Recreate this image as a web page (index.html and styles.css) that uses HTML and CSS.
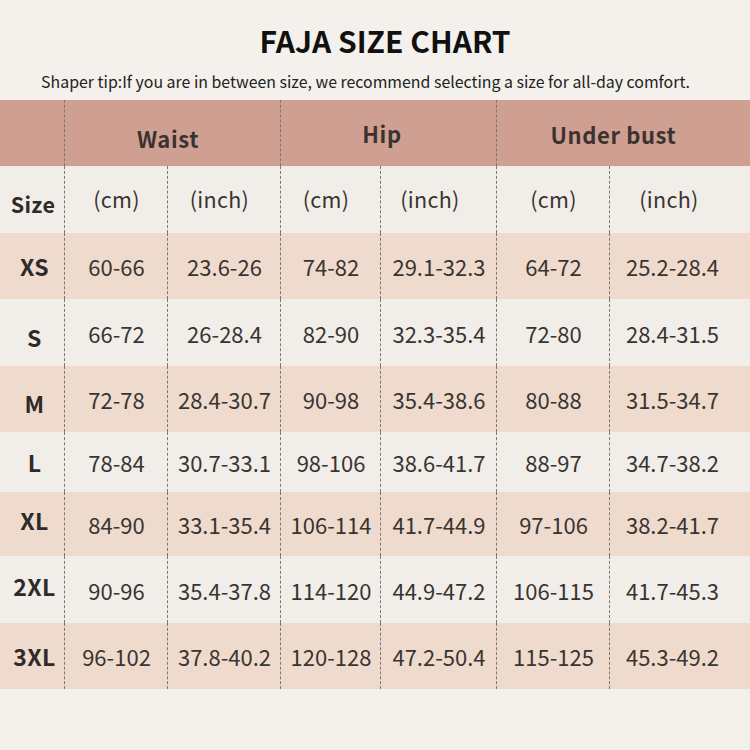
FILE: index.html
```html
<!DOCTYPE html>
<html>
<head>
<meta charset="utf-8">
<link rel="stylesheet" href="styles.css">
</head>
<body>
<div class="page">
  <h1 class="title">FAJA SIZE CHART</h1>
  <p class="tip">Shaper tip:If you are in between size, we recommend selecting a size for all-day comfort.</p>
  <div class="chart">
    <div class="row head">
      <div class="cell"></div>
      <div class="cell span2 dash waist">Waist</div>
      <div class="cell span2 dash hip">Hip</div>
      <div class="cell span2 dash bust">Under bust</div>
    </div>
    <div class="row units light">
      <div class="cell size">Size</div>
      <div class="cell dash">(cm)</div>
      <div class="cell dash shift">(inch)</div>
      <div class="cell dash shift">(cm)</div>
      <div class="cell dash shift2">(inch)</div>
      <div class="cell dash">(cm)</div>
      <div class="cell dash last">(inch)</div>
    </div>
    <div class="row data pink">
      <div class="cell size">XS</div>
      <div class="cell dash">60-66</div>
      <div class="cell dash">23.6-26</div>
      <div class="cell dash">74-82</div>
      <div class="cell dash">29.1-32.3</div>
      <div class="cell dash">64-72</div>
      <div class="cell dash last">25.2-28.4</div>
    </div>
    <div class="row data light tall">
      <div class="cell size low">S</div>
      <div class="cell dash">66-72</div>
      <div class="cell dash">26-28.4</div>
      <div class="cell dash">82-90</div>
      <div class="cell dash">32.3-35.4</div>
      <div class="cell dash">72-80</div>
      <div class="cell dash last">28.4-31.5</div>
    </div>
    <div class="row data pink">
      <div class="cell size low">M</div>
      <div class="cell dash">72-78</div>
      <div class="cell dash">28.4-30.7</div>
      <div class="cell dash">90-98</div>
      <div class="cell dash">35.4-38.6</div>
      <div class="cell dash">80-88</div>
      <div class="cell dash last">31.5-34.7</div>
    </div>
    <div class="row data light short">
      <div class="cell size">L</div>
      <div class="cell dash">78-84</div>
      <div class="cell dash">30.7-33.1</div>
      <div class="cell dash">98-106</div>
      <div class="cell dash">38.6-41.7</div>
      <div class="cell dash">88-97</div>
      <div class="cell dash last">34.7-38.2</div>
    </div>
    <div class="row data pink mid">
      <div class="cell size high">XL</div>
      <div class="cell dash">84-90</div>
      <div class="cell dash">33.1-35.4</div>
      <div class="cell dash">106-114</div>
      <div class="cell dash">41.7-44.9</div>
      <div class="cell dash">97-106</div>
      <div class="cell dash last">38.2-41.7</div>
    </div>
    <div class="row data light tall">
      <div class="cell size high">2XL</div>
      <div class="cell dash">90-96</div>
      <div class="cell dash">35.4-37.8</div>
      <div class="cell dash">114-120</div>
      <div class="cell dash">44.9-47.2</div>
      <div class="cell dash">106-115</div>
      <div class="cell dash last">41.7-45.3</div>
    </div>
    <div class="row data pink">
      <div class="cell size">3XL</div>
      <div class="cell dash">96-102</div>
      <div class="cell dash">37.8-40.2</div>
      <div class="cell dash">120-128</div>
      <div class="cell dash">47.2-50.4</div>
      <div class="cell dash">115-125</div>
      <div class="cell dash last">45.3-49.2</div>
    </div>
  </div>
</div>
</body>
</html>
```

FILE: styles.css
```css
html, body {
  margin: 0;
  padding: 0;
  background: #f4f1ec;
}
.page {
  width: 750px;
  height: 750px;
  display: flex;
  flex-direction: column;
  font-family: "Noto Sans CJK SC", "Noto Sans", sans-serif;
  color: #3a3431;
}
.title {
  margin: 20px 0 0 0;
  height: 40px;
  line-height: 40px;
  text-align: center;
  font-size: 30px;
  font-weight: 700;
  color: #111;
  padding-left: 20px;
}
.tip {
  margin: 12px 0 0 0;
  height: 28px;
  line-height: 20px;
  text-align: center;
  font-size: 15.9px;
  color: #222;
  padding-right: 19px;
}
.chart {
  display: flex;
  flex-direction: column;
}
.row {
  display: grid;
  grid-template-columns: 65px 103px 113px 100px 116px 113px 140px;
  height: 66px;
}
.row.units { height: 67px; }
.row.tall { height: 67px; }
.row.short { height: 60px; }
.row.mid { height: 64px; }
.head { background: #cf9f92; }
.light { background: #f1eeea; }
.pink { background: #eedbcd; }
.cell {
  display: flex;
  align-items: center;
  justify-content: center;
  font-size: 22px;
  white-space: nowrap;
}
.span2 { grid-column: span 2; }
.dash {
  border-left: 1px dashed #7d7673;
  margin-left: -1px;
}
.head .cell {
  font-size: 22px;
  font-weight: 700;
  color: #3b3330;
  letter-spacing: 0.6px;
}
.head .waist { padding-top: 9px; padding-right: 10px; }
.head .hip { padding-bottom: 1px; padding-right: 14px; }
.head .bust { padding-top: 2px; padding-right: 20px; }
.units .cell { font-size: 21.5px; padding-bottom: 2px; letter-spacing: 0.3px; }
.units .shift { padding-right: 10px; }
.units .shift2 { padding-right: 18px; }
.units .size { padding-top: 8px; padding-bottom: 0; padding-right: 3px; }
.last { padding-right: 15px; }
.units .last { padding-right: 22px; }
.size {
  font-weight: 700;
  font-size: 23px;
  color: #2f2a28;
  padding-left: 4px;
  letter-spacing: 0.4px;
}
.data .low { padding-top: 8px; }
.data .high { padding-bottom: 8px; }
```
